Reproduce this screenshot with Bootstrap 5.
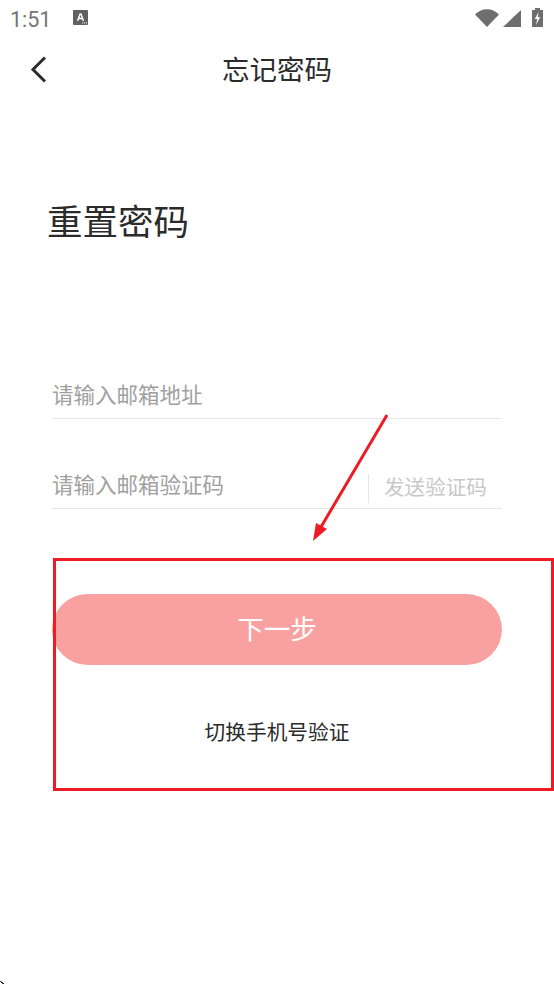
<!DOCTYPE html>
<html lang="zh-CN">
<head>
  <meta charset="UTF-8" />
  <meta name="viewport" content="width=device-width, initial-scale=1.0">
  <title>忘记密码</title>
  <link href="https://cdn.jsdelivr.net/npm/bootstrap@5.3.3/dist/css/bootstrap.min.css" rel="stylesheet">
  <style>
    html,body{height:985px;overflow:hidden}
    body{margin:0;background:#fff;color:#2b2b2b;font-family:"Noto Sans CJK SC","Liberation Sans",sans-serif;position:relative}
    .status-bar{height:40px;padding:0 10px;color:#757575}
    .status-time{font-family:Roboto,sans-serif;font-size:21.5px;line-height:1}
    .status-app{margin-left:22px;margin-top:-6px;display:block}
    .top-bar{height:60px;position:relative}
    .back-btn{position:absolute;left:28px;top:14px;width:22px;height:30px;padding:0;border:0;background:none;display:block}
    .page-title{font-size:27.5px;font-weight:400;line-height:56px;margin:0;color:#2b2b2b}
    .reset-title{font-size:35.5px;font-weight:400;line-height:50px;margin:95px 0 0 47px;color:#2b2b2b}
    .form-area{margin:128px 52px 0 52px}
    .field-row{height:46px;border-bottom:1px solid #e6e6e6;margin-bottom:44px}
    .field-input{flex:1;min-width:0;border:0;outline:0;padding:0;background:none;font-size:21.5px;line-height:1;height:40px}
    .field-input::placeholder{color:#a0a0a0;opacity:1}
    .send-code{width:134px;height:29px;margin-top:11px;border-left:1px solid #e6e6e6;padding-left:15px;color:#c8c8c8;font-size:20.6px;line-height:24px;white-space:nowrap}
    .next-btn{display:block;width:100%;height:71px;margin-top:85px;padding:0 0 2px;border:0;border-radius:36px;background:#f8a1a0;color:#fff;font-size:26.5px;line-height:1}
    .switch-link{margin-top:49px;text-align:center;font-size:20.7px;line-height:34px;color:#2b2b2b}
    .mark-box{position:absolute;left:53px;top:558px;width:501px;height:233px;border:3px solid #ed1c24;pointer-events:none}
    .mark-arrow{position:absolute;left:300px;top:405px;pointer-events:none}
    .corner-dot{position:absolute;left:0;top:981px}
  </style>
</head>
<body>
  <!-- Status bar -->
  <div class="status-bar d-flex align-items-center">
    <span class="status-time">1:51</span>
    <svg class="status-app" width="15" height="15" viewBox="0 0 15 15">
      <rect width="15" height="15" rx="1" fill="#616161"/>
      <path d="M3.800 10.800 6.600 3.200h1.800l2.800 7.600H9.500L9 9.300H6l-.5 1.500zM6.500 7.800h2l-1-3z" fill="#fff"/>
      <rect x="9" y="12.400" width="1.200" height="1" fill="#fff"/><rect x="11" y="12.400" width="1.200" height="1" fill="#fff"/><rect x="13" y="12.400" width="1" height="1" fill="#fff"/>
    </svg>
    <div class="ms-auto d-flex align-items-center">
      <svg width="74" height="30" viewBox="0 0 74 30">
        <path d="M5 9.500C12 2.500 22 2.500 29 9.500L17 22z" fill="#6e6e6e"/>
        <path d="M33 22 51 5V22z" fill="#6e6e6e"/>
        <path d="M62 5h3V3h5v2h3v17H62z" fill="#6e6e6e"/>
        <path d="M68.500 7 64.800 14h2.400l-1.200 6 4.200-8h-2.500z" fill="#fff"/>
      </svg>
    </div>
  </div>

  <!-- Top bar -->
  <div class="top-bar text-center">
    <button class="back-btn" type="button" aria-label="返回">
      <svg width="22" height="30" viewBox="0 0 22 30"><path d="M17 3.500 5 15.500l12 12" fill="none" stroke="#2b2b2b" stroke-width="3"/></svg>
    </button>
    <h1 class="page-title">忘记密码</h1>
  </div>

  <h2 class="reset-title">重置密码</h2>

  <!-- Form -->
  <form class="form-area" onsubmit="return false">
    <div class="field-row d-flex">
      <input class="field-input" type="text" placeholder="请输入邮箱地址">
    </div>
    <div class="field-row d-flex">
      <input class="field-input" type="text" placeholder="请输入邮箱验证码">
      <div class="send-code">发送验证码</div>
    </div>
    <button class="next-btn" type="button">下一步</button>
    <div class="switch-link">切换手机号验证</div>
  </form>

  <!-- Annotation over the screenshot -->
  <div class="mark-box"></div>
  <svg class="mark-arrow" width="100" height="145" viewBox="0 0 100 145">
    <path d="M87 10 21 122" stroke="#ed1c24" stroke-width="3" fill="none"/>
    <path d="M13 136 16 118 27 124z" fill="#ed1c24"/>
  </svg>
  <svg class="corner-dot" width="6" height="4" viewBox="0 0 6 4"><path d="M0 0h1.500v1H3v1h1v1H2V2H1V1H0z" fill="#333"/></svg>

  <script src="https://cdn.jsdelivr.net/npm/bootstrap@5.3.3/dist/js/bootstrap.bundle.min.js"></script>
</body>
</html>
